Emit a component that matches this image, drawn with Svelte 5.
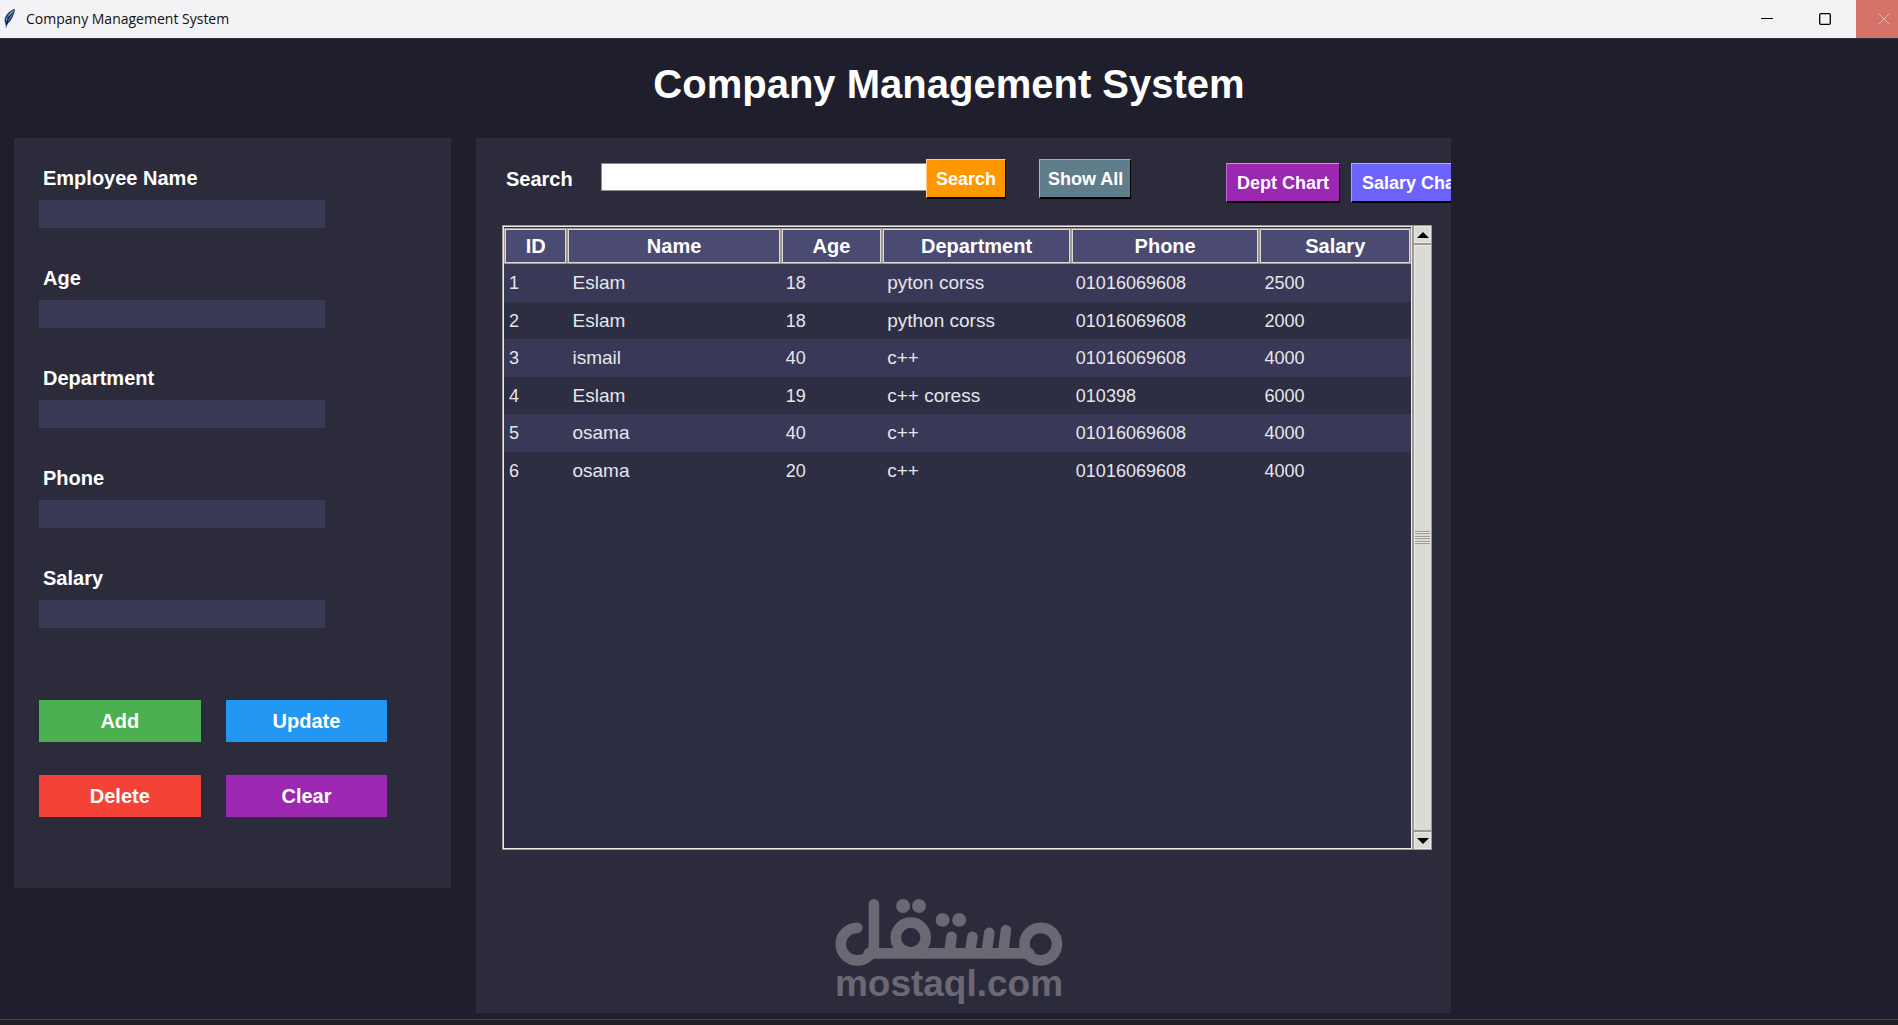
<script>
  const fields = [
    { id: 'name', label: 'Employee Name' },
    { id: 'age', label: 'Age' },
    { id: 'department', label: 'Department' },
    { id: 'phone', label: 'Phone' },
    { id: 'salary', label: 'Salary' }
  ];

  const columns = ['ID', 'Name', 'Age', 'Department', 'Phone', 'Salary'];

  const employees = [
    { id: 1, name: 'Eslam', age: 18, department: 'pyton corss', phone: '01016069608', salary: 2500 },
    { id: 2, name: 'Eslam', age: 18, department: 'python corss', phone: '01016069608', salary: 2000 },
    { id: 3, name: 'ismail', age: 40, department: 'c++', phone: '01016069608', salary: 4000 },
    { id: 4, name: 'Eslam', age: 19, department: 'c++ coress', phone: '010398', salary: 6000 },
    { id: 5, name: 'osama', age: 40, department: 'c++', phone: '01016069608', salary: 4000 },
    { id: 6, name: 'osama', age: 20, department: 'c++', phone: '01016069608', salary: 4000 }
  ];

  let form = $state({ name: '', age: '', department: '', phone: '', salary: '' });
  let query = $state('');
</script>

<div class="window">
  <header class="titlebar">
    <svg class="feather" viewBox="0 0 14 22" aria-hidden="true">
      <path d="M13 1C8 2 3 7 2.500 12.500L3.500 16L4 20.500L5 16.500C9 13 12.500 7 13 1Z" fill="#2b3550" />
      <path d="M12 2C8 4 4.500 8 4 13L5 14.500C8.500 11 11.500 7 12 2Z" fill="#3f7fc4" />
      <path d="M10.500 4.500L6 10.500L4.500 17" fill="none" stroke="#0d1830" stroke-width="1.200" />
      <path d="M10.500 3.500L7 7.500M5 12L4.500 10.500" fill="none" stroke="#a9cdf0" stroke-width="1" />
    </svg>
    <span class="caption">Company Management System</span>
    <div class="window-controls">
      <button aria-label="Minimize"><svg viewBox="0 0 12 12"><path d="M0 5.500H12" stroke="#000" /></svg></button>
      <button aria-label="Maximize"><svg viewBox="0 0 12 12"><rect x="0.700" y="0.700" width="10.600" height="10.600" rx="1.200" fill="none" stroke="#000" stroke-width="1.300" /></svg></button>
      <button class="close" aria-label="Close"><svg viewBox="0 0 12 12"><path d="M0.500 0.500L11.500 11.500M11.500 0.500L0.500 11.500" stroke="#d5bdb5" /></svg></button>
    </div>
  </header>

  <h1>Company Management System</h1>

  <main>
    <form class="panel editor" onsubmit={(e) => e.preventDefault()}>
      {#each fields as field (field.id)}
        <div class="field">
          <label for={field.id}>{field.label}</label>
          <input id={field.id} type="text" bind:value={form[field.id]} />
        </div>
      {/each}
      <div class="actions">
        <button type="button" class="add">Add</button>
        <button type="button" class="update">Update</button>
        <button type="button" class="delete">Delete</button>
        <button type="button" class="clear">Clear</button>
      </div>
    </form>

    <section class="panel records">
      <div class="toolbar">
        <label for="query">Search</label>
        <input id="query" type="text" bind:value={query} />
        <button class="raised search">Search</button>
        <button class="raised show-all">Show All</button>
        <div class="charts">
          <button class="raised dept">Dept Chart</button>
          <button class="raised pay">Salary Chart</button>
        </div>
      </div>

      <div class="listing">
        <div class="tree">
          <table>
            <colgroup>
              <col class="c-id" /><col class="c-name" /><col class="c-age" />
              <col class="c-dept" /><col class="c-phone" /><col class="c-salary" />
            </colgroup>
            <thead>
              <tr>{#each columns as column}<th><span>{column}</span></th>{/each}</tr>
            </thead>
            <tbody>
              {#each employees as e (e.id)}
                <tr>
                  <td class="num">{e.id}</td>
                  <td>{e.name}</td>
                  <td class="num">{e.age}</td>
                  <td>{e.department}</td>
                  <td class="num">{e.phone}</td>
                  <td class="num">{e.salary}</td>
                </tr>
              {/each}
            </tbody>
          </table>
        </div>
        <div class="scrollbar">
          <button aria-label="Scroll up"><svg viewBox="0 0 12 6"><path d="M0 6L6 0L12 6Z" /></svg></button>
          <div class="thumb"><i></i><i></i><i></i></div>
          <button aria-label="Scroll down"><svg viewBox="0 0 12 6"><path d="M0 0L6 6L12 0Z" /></svg></button>
        </div>
      </div>
    </section>
  </main>

  <footer class="taskbar"></footer>

  <div class="watermark">
    <svg viewBox="105 87 684 202" role="img" aria-label="مستقل">
      <g fill="none" stroke="#6b6873" stroke-width="32" stroke-linecap="round">
        <circle cx="724" cy="223" r="49" />
        <path d="M205 251H690" />
        <circle cx="332" cy="203" r="45" />
        <path d="M221 103V223A50 49 0 1 1 171 174" />
        <path d="M619 181L611 245M569 189L561 245M518 201L511 245M455 201L449 245" />
      </g>
      <g fill="#6b6873">
        <circle cx="309" cy="108" r="21" /><circle cx="357" cy="108" r="21" />
        <circle cx="428" cy="150" r="21" /><circle cx="478" cy="150" r="21" />
      </g>
    </svg>
    <span>mostaql.com</span>
  </div>
</div>

<style>
  :global(body) {
    background: #1f1e2d;
  }

  .window {
    position: relative;
    display: flex;
    flex-direction: column;
    min-height: 100vh;
    background: #1f1e2d;
    color: #fff;
    font-family: 'Liberation Sans', Arial, sans-serif;
    font-size: 20px;
    line-height: 24px;
  }

  .window *,
  .window {
    box-sizing: border-box;
  }

  button,
  input {
    margin: 0;
    padding: 0;
    border: 0;
    border-radius: 0;
    color: inherit;
    font: inherit;
  }

  .titlebar {
    display: flex;
    align-items: center;
    height: 38px;
    padding-left: 2px;
    background: #f3f2f4;
    color: #111;
  }

  .feather {
    width: 14px;
    height: 22px;
  }

  .caption {
    margin-left: 10px;
    font-family: 'Open Sans', 'Noto Sans', sans-serif;
    font-size: 14px;
  }

  .window-controls {
    display: flex;
    align-self: stretch;
    margin-left: auto;
    overflow: hidden;
  }

  .window-controls button {
    display: grid;
    place-items: center;
    width: 58px;
    padding-right: 4px;
    background: none;
  }

  .window-controls svg {
    width: 12px;
    height: 12px;
  }

  .window-controls .close {
    width: 42px;
    padding: 0 0 0 14px;
    background: #d57368;
  }

  h1 {
    margin: 0;
    border-top: 1px solid #2f2e40;
    padding: 21px 0 30px;
    font-size: 40px;
    line-height: 48px;
    text-align: center;
  }

  main {
    display: grid;
    flex: 1;
    grid-template-columns: 437fr 975fr 422fr;
    column-gap: 25px;
    padding: 0 0 6px 14px;
  }

  .panel {
    min-width: 0;
    background: #2c2b3c;
    font-weight: bold;
  }

  .editor {
    align-self: start;
    padding: 28px 25px 71px;
  }

  .field {
    display: flex;
    flex-direction: column;
    gap: 10px;
    margin-bottom: 38px;
  }

  .field label {
    padding-left: 4px;
  }

  .field input {
    width: 74%;
    height: 28px;
    background: #3b3a56;
  }

  .actions {
    display: grid;
    grid-template-columns: 1fr 1fr;
    gap: 33px 25px;
    width: 90%;
    padding-top: 34px;
  }

  .actions button {
    height: 42px;
  }

  .add { background: #4caf50; }
  .update { background: #2196f3; }
  .delete { background: #f44336; }
  .clear { background: #9c27b0; }

  .records {
    display: flex;
    flex-direction: column;
    overflow: hidden;
  }

  .toolbar {
    display: flex;
    align-items: flex-start;
    padding: 21px 0 0 30px;
  }

  .toolbar label {
    flex: none;
    width: 95px;
    padding-top: 8px;
  }

  .toolbar input {
    flex: none;
    width: 325px;
    height: 28px;
    margin-top: 4px;
    border: 1px solid #8f8d93;
    border-right: 0;
    background: #fff;
    color: #000;
  }

  .raised {
    flex: none;
    height: 40px;
    border: 1px solid #000;
    border-width: 1px 1px 2px 1px;
    padding: 0 8px;
    font-size: 18px;
    font-weight: bold;
    white-space: nowrap;
  }

  .search {
    width: 80px;
    border-color: #ffc98a #000 #000 #ffc98a;
    background: #ff9800;
  }

  .show-all {
    width: 92px;
    margin-left: 33px;
    border-color: #a9a9b8 #000 #000 #a9b8bf;
    background: #607d8b;
  }

  .charts {
    display: flex;
    flex: none;
    gap: 11px;
    margin: 4px 0 0 95px;
  }

  .dept {
    width: 114px;
    border-color: #cf8fd8 #000 #000 #c764d6;
    background: #9c27b0;
  }

  .pay {
    width: 128px;
    border-color: #b5b0f5 #000 #000 #a8a3ff;
    background: #6c63ff;
  }

  .listing {
    display: flex;
    flex: 1;
    margin: 22px 19px 163px 26px;
  }

  .tree {
    flex: 1;
    min-width: 0;
    border: 1px solid #9e9a91;
    outline: 1px solid #eeebe7;
    outline-offset: -2px;
    padding: 2px 1px 1px;
    background: #2d2d44;
  }

  table {
    width: 100%;
    border-spacing: 0;
    table-layout: fixed;
  }

  .c-id { width: 7%; }
  .c-name { width: 23.500%; }
  .c-age { width: 11.200%; }
  .c-dept { width: 20.800%; }
  .c-phone { width: 20.800%; }
  .c-salary { width: 16.700%; }

  th {
    padding: 0;
    background: #4b4a73;
  }

  th span {
    display: block;
    height: 36px;
    border: 1px solid #9e9a91;
    box-shadow: inset 0 0 0 1px #dedad3;
    line-height: 34px;
  }

  td {
    height: 38px;
    padding: 0 5px;
    color: #e6e6ea;
    font-size: 19px;
    font-weight: normal;
  }

  .num {
    font-size: 18px;
  }

  tbody tr:nth-child(odd) {
    background: #393856;
  }

  tbody tr:nth-child(even) td {
    height: 37px;
  }

  .scrollbar {
    display: flex;
    flex: none;
    flex-direction: column;
    width: 19px;
    border: 1px solid #9e9a91;
    background: #dcdad5;
  }

  .scrollbar button {
    display: grid;
    place-items: center;
    height: 17px;
    border: 1px solid #eeebe7;
    background: #dcdad5;
  }

  .scrollbar svg {
    width: 12px;
    height: 6px;
  }

  .thumb {
    display: flex;
    flex: 1;
    flex-direction: column;
    justify-content: center;
    gap: 2px;
    border: solid #9e9a91;
    border-width: 2px 0;
    padding: 0 1px;
    box-shadow: inset 1px 1px #eeebe7;
  }

  .thumb i {
    height: 3px;
    border: solid #9e9a91;
    border-width: 1px 0;
    background: #eeebe7;
  }

  .taskbar {
    height: 6px;
    border-top: 1px solid #47464f;
    background: #202126;
  }

  .watermark {
    position: absolute;
    bottom: 23px;
    left: 50%;
    display: flex;
    flex-direction: column;
    align-items: center;
    color: #6b6873;
    font-size: 37px;
    font-weight: bold;
    line-height: 36px;
    transform: translateX(-50%);
    pointer-events: none;
  }

  .watermark svg {
    width: 228px;
    height: 67px;
  }
</style>
